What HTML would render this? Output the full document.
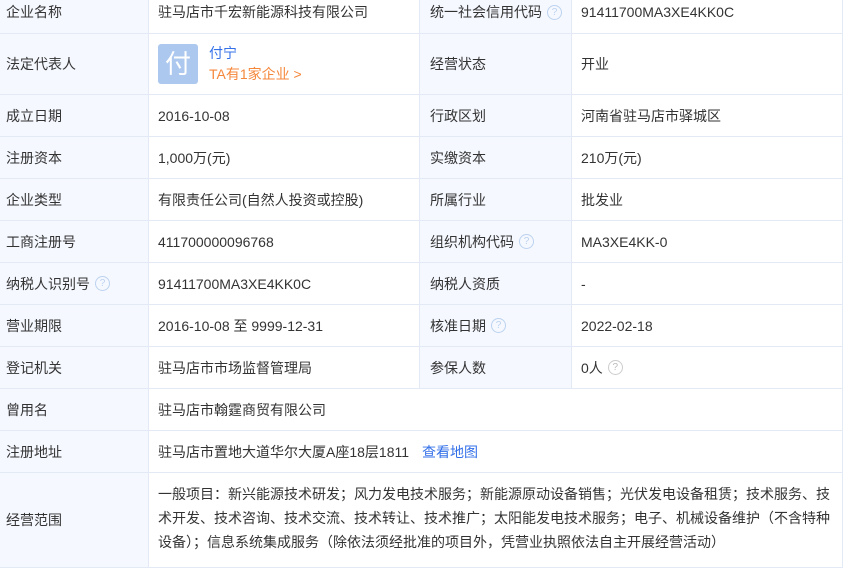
<!DOCTYPE html>
<html><head><meta charset="utf-8"><style>
*{margin:0;padding:0;box-sizing:border-box}
body{width:847px;height:558px;overflow:hidden;background:#fff;font-family:"Liberation Sans","Noto Sans CJK SC",sans-serif;font-size:14px;color:#333;position:relative}
.c{position:absolute;border-right:1px solid #e3eaf6;border-bottom:1px solid #e3eaf6;display:flex;align-items:center;padding-left:6px;height:42px}
.l{background:#f5f8ff}
.v{padding-left:9px;background:#fff}
.r{padding-left:10px}
.a{left:0;width:149px}.b{left:149px;width:271px}.d{left:420px;width:152px}.e{left:572px;width:271px}.w{left:149px;width:694px}
.q{display:inline-block;width:15px;height:15px;border:1px solid #bcd2ef;border-radius:50%;color:#bcd2ef;font-size:10px;line-height:13px;text-align:center;margin-left:5px}
.g{border-color:#ccc;color:#bbb}
a{color:#3370e8;text-decoration:none}
</style></head><body>
<div class="c l a" style="top:-9px;height:43px">企业名称</div>
<div class="c v b" style="top:-9px;height:43px">驻马店市千宏新能源科技有限公司</div>
<div class="c l r d" style="top:-9px;height:43px">统一社会信用代码<span class="q">?</span></div>
<div class="c v e" style="top:-9px;height:43px">91411700MA3XE4KK0C</div>

<div class="c l a" style="top:34px;height:61px">法定代表人</div>
<div class="c v b" style="top:34px;height:61px">
<div style="width:40px;height:40px;background:#adc8ee;border-radius:3px;color:#fff;font-size:26px;text-align:center;line-height:40px">付</div>
<div style="margin-left:11px;line-height:21px"><div style="color:#3370e8">付宁</div><div style="color:#f5873b">TA有1家企业 &gt;</div></div>
</div>
<div class="c l r d" style="top:34px;height:61px">经营状态</div>
<div class="c v e" style="top:34px;height:61px">开业</div>

<div class="c l a" style="top:95px">成立日期</div>
<div class="c v b" style="top:95px">2016-10-08</div>
<div class="c l r d" style="top:95px">行政区划</div>
<div class="c v e" style="top:95px">河南省驻马店市驿城区</div>

<div class="c l a" style="top:137px">注册资本</div>
<div class="c v b" style="top:137px">1,000万(元)</div>
<div class="c l r d" style="top:137px">实缴资本</div>
<div class="c v e" style="top:137px">210万(元)</div>

<div class="c l a" style="top:179px">企业类型</div>
<div class="c v b" style="top:179px">有限责任公司(自然人投资或控股)</div>
<div class="c l r d" style="top:179px">所属行业</div>
<div class="c v e" style="top:179px">批发业</div>

<div class="c l a" style="top:221px">工商注册号</div>
<div class="c v b" style="top:221px">411700000096768</div>
<div class="c l r d" style="top:221px">组织机构代码<span class="q">?</span></div>
<div class="c v e" style="top:221px">MA3XE4KK-0</div>

<div class="c l a" style="top:263px">纳税人识别号<span class="q">?</span></div>
<div class="c v b" style="top:263px">91411700MA3XE4KK0C</div>
<div class="c l r d" style="top:263px">纳税人资质</div>
<div class="c v e" style="top:263px">-</div>

<div class="c l a" style="top:305px">营业期限</div>
<div class="c v b" style="top:305px">2016-10-08 至 9999-12-31</div>
<div class="c l r d" style="top:305px">核准日期<span class="q">?</span></div>
<div class="c v e" style="top:305px">2022-02-18</div>

<div class="c l a" style="top:347px">登记机关</div>
<div class="c v b" style="top:347px">驻马店市市场监督管理局</div>
<div class="c l r d" style="top:347px">参保人数</div>
<div class="c v e" style="top:347px">0人<span class="q g">?</span></div>

<div class="c l a" style="top:389px">曾用名</div>
<div class="c v w" style="top:389px">驻马店市翰霆商贸有限公司</div>

<div class="c l a" style="top:431px">注册地址</div>
<div class="c v w" style="top:431px">驻马店市置地大道华尔大厦A座18层1811<a style="margin-left:13px">查看地图</a></div>

<div class="c l a" style="top:473px;height:95px">经营范围</div>
<div class="c v w" style="top:473px;height:95px;align-items:flex-start;padding-top:9px;padding-right:4px;line-height:24px">一般项目：新兴能源技术研发；风力发电技术服务；新能源原动设备销售；光伏发电设备租赁；技术服务、技术开发、技术咨询、技术交流、技术转让、技术推广；太阳能发电技术服务；电子、机械设备维护（不含特种设备）；信息系统集成服务（除依法须经批准的项目外，凭营业执照依法自主开展经营活动）</div>
</body></html>
